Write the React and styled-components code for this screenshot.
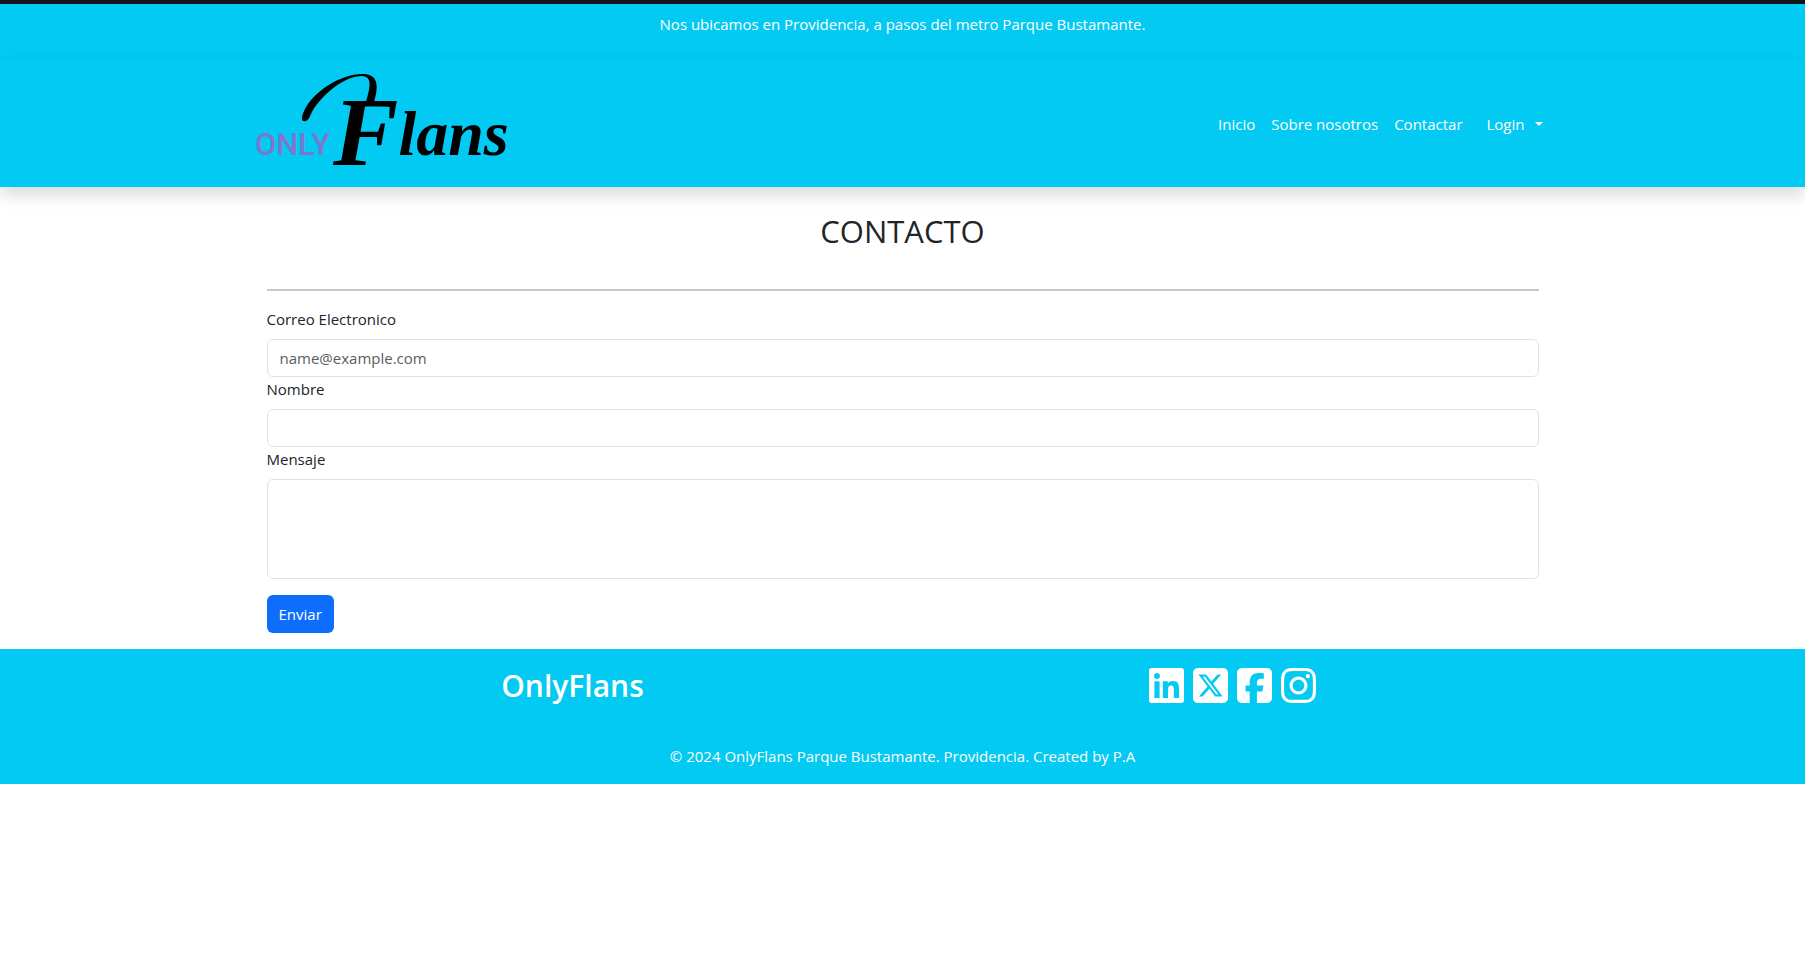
import React from "react";
import styled, { createGlobalStyle, ThemeProvider } from "styled-components";
import {
  FaLinkedin,
  FaSquareXTwitter,
  FaSquareFacebook,
  FaInstagram,
} from "react-icons/fa6";

const theme = {
  brand: "#02caf2",
  ink: "#212529",
  border: "#dee2e6",
  primary: "#0d6efd",
  font: '"Segoe UI", "Open Sans", "Noto Sans", sans-serif',
};

const GlobalStyle = createGlobalStyle`
  *, *::before, *::after { box-sizing: border-box; }
  body {
    margin: 0;
    background: #fff;
    color: ${theme.ink};
    font: 400 15px/24px ${theme.font};
  }
  button, input, textarea { font: inherit; color: inherit; }
`;

const Container = styled.div`
  width: 100%;
  max-width: 1320px;
  margin: 0 auto;
  padding: 0 ${(p) => p.$gutter ?? 12}px;
`;

const Banner = styled.div`
  border-top: 4px solid #141416;
  padding: 8px 16px 24px;
  background: ${(p) => p.theme.brand};
  color: #fff;
  text-align: center;
`;

const BannerText = styled.p`
  margin: 0;
`;

const NavBar = styled.header`
  position: relative;
  padding: 8px 0;
  background: ${(p) => p.theme.brand};
  box-shadow: 0 8px 16px rgba(0, 0, 0, 0.15);
`;

const NavRow = styled(Container)`
  display: flex;
  flex-wrap: wrap;
  align-items: center;
  justify-content: space-between;
`;

const Brand = styled.a`
  display: block;
  line-height: 0;
`;

const LogoArt = styled.svg`
  display: block;
  overflow: visible;
`;

const Nav = styled.nav`
  display: flex;
  flex-wrap: wrap;
  align-items: center;
`;

const NavLink = styled.a`
  padding: 8px;
  color: #fff;
  text-decoration: none;
`;

const LoginToggle = styled.button`
  display: flex;
  align-items: center;
  gap: 10px;
  margin-left: 8px;
  padding: 8px;
  border: 0;
  background: none;
  color: #fff;
  cursor: pointer;
`;

const Caret = styled.span`
  border-top: 4px solid currentColor;
  border-left: 4px solid transparent;
  border-right: 4px solid transparent;
`;

const Title = styled.h2`
  margin: 0 0 38px;
  padding-top: 24px;
  font-size: 31px;
  font-weight: 500;
  line-height: 40px;
  text-align: center;
`;

const Divider = styled.hr`
  height: 2px;
  margin: 0 0 16px;
  border: 0;
  background: #c7c8c9;
`;

const Form = styled.form`
  display: flex;
  flex-direction: column;
  padding-bottom: 16px;
`;

const Label = styled.label`
  margin-bottom: 8px;
`;

const Input = styled.input`
  height: 38px;
  padding: 6px 12px;
  border: 1px solid ${(p) => p.theme.border};
  border-radius: 6px;
  background: #fff;
  &::placeholder {
    color: #595c5f;
    opacity: 1;
  }
`;

const TextArea = styled(Input).attrs({ as: "textarea" })`
  height: 100px;
  resize: none;
`;

const SubmitButton = styled.button`
  align-self: flex-start;
  margin-top: 16px;
  padding: 7px 12px;
  border: 0;
  border-radius: 6px;
  background: ${(p) => p.theme.primary};
  color: #fff;
  cursor: pointer;
`;

const Footer = styled.footer`
  padding: 16px 0;
  background: ${(p) => p.theme.brand};
  color: #fff;
  text-align: center;
`;

const FooterRow = styled(Container)`
  display: grid;
  grid-template-columns: 1fr 1fr;
  align-items: center;
  margin-bottom: 38px;
`;

const FooterTitle = styled.h2`
  margin: 0;
  font-size: 30px;
  font-weight: 600;
  line-height: 41px;
`;

const Socials = styled.div`
  display: flex;
  justify-content: center;
  gap: 9px;
`;

const SocialLink = styled.a`
  display: flex;
  color: #fff;
  svg {
    width: 35px;
    height: 41px;
  }
`;

const Copyright = styled.p`
  margin: 0;
`;

const Logo = () => (
  <LogoArt width="250" height="111" viewBox="0 0 250 111" role="img" aria-label="Only Flans">
    <text
      x="0"
      y="87"
      fill="#7b78cf"
      fontFamily='Roboto, "Liberation Sans", sans-serif'
      fontSize="31"
      fontWeight="500"
    >
      ONLY
    </text>
    <path
      d="M48 53 C53 54 54 50 56 46 C63 31 86 9 106 8 C117 8 116 17 111 34 L119 34 C125 15 121 6 108 6 C84 6 58 25 50 41 C47 47 46 51 48 53Z"
      fill="#000"
    />
    <text
      x="78"
      y="97"
      fontFamily='"Liberation Serif", serif'
      fontSize="64"
      fontStyle="italic"
      fontWeight="700"
    >
      <tspan fontSize="98">F</tspan>
      <tspan dy="-10">lans</tspan>
    </text>
  </LogoArt>
);

const navLinks = ["Inicio", "Sobre nosotros", "Contactar"];

const socials = [
  { name: "LinkedIn", Icon: FaLinkedin },
  { name: "X", Icon: FaSquareXTwitter },
  { name: "Facebook", Icon: FaSquareFacebook },
  { name: "Instagram", Icon: FaInstagram },
];

export default function App() {
  return (
    <ThemeProvider theme={theme}>
      <GlobalStyle />
      <Banner>
        <BannerText>
          Nos ubicamos en Providencia, a pasos del metro Parque Bustamante.
        </BannerText>
      </Banner>
      <NavBar>
        <NavRow>
          <Brand href="#inicio">
            <Logo />
          </Brand>
          <Nav>
            {navLinks.map((label) => (
              <NavLink key={label} href="#">
                {label}
              </NavLink>
            ))}
            <LoginToggle type="button">
              Login
              <Caret />
            </LoginToggle>
          </Nav>
        </NavRow>
      </NavBar>
      <Container as="main" $gutter={24}>
        <Title>CONTACTO</Title>
        <Divider />
        <Form onSubmit={(e) => e.preventDefault()}>
          <Label htmlFor="email">Correo Electronico</Label>
          <Input id="email" type="email" placeholder="name@example.com" />
          <Label htmlFor="name">Nombre</Label>
          <Input id="name" type="text" />
          <Label htmlFor="message">Mensaje</Label>
          <TextArea id="message" />
          <SubmitButton type="submit">Enviar</SubmitButton>
        </Form>
      </Container>
      <Footer>
        <FooterRow $gutter={0}>
          <FooterTitle>OnlyFlans</FooterTitle>
          <Socials>
            {socials.map(({ name, Icon }) => (
              <SocialLink key={name} href="#" aria-label={name}>
                <Icon />
              </SocialLink>
            ))}
          </Socials>
        </FooterRow>
        <Copyright>
          © 2024 OnlyFlans Parque Bustamante. Providencia. Created by P.A
        </Copyright>
      </Footer>
    </ThemeProvider>
  );
}
